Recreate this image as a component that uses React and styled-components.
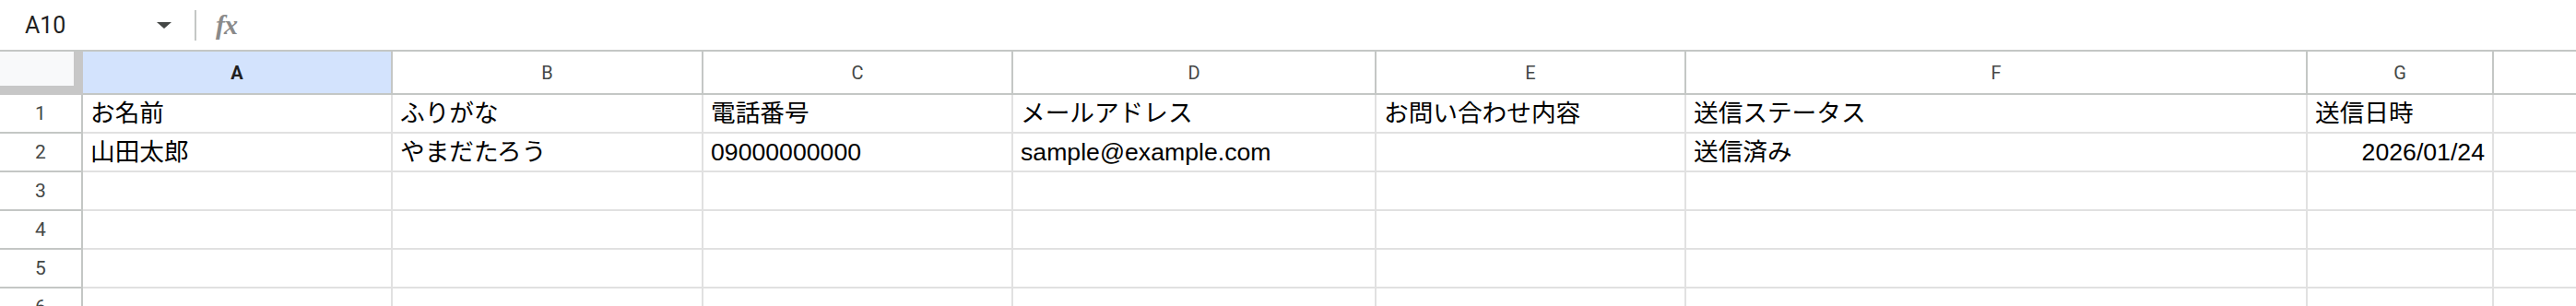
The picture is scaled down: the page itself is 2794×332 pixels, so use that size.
import React from "react";
import styled, { createGlobalStyle } from "styled-components";

const GlobalStyle = createGlobalStyle`
  html, body {
    margin: 0;
    padding: 0;
    background: #ffffff;
  }
  body {
    font-family: "Liberation Sans", Arial, "Noto Sans CJK JP", sans-serif;
  }
`;

// column H runs past the right edge of the window, so its letter is off-screen
const COLS = [
  { key: "A", width: 336 },
  { key: "B", width: 337 },
  { key: "C", width: 336 },
  { key: "D", width: 394 },
  { key: "E", width: 336 },
  { key: "F", width: 674 },
  { key: "G", width: 202 },
  { key: "H", width: 336 },
];

const ROWS = [
  ["お名前", "ふりがな", "電話番号", "メールアドレス", "お問い合わせ内容", "送信ステータス", "送信日時", ""],
  ["山田太郎", "やまだたろう", "09000000000", "sample@example.com", "", "送信済み", "2026/01/24", ""],
  [],
  [],
  [],
  [],
];

const Page = styled.div`
  width: 2794px;
  height: 332px;
  overflow: hidden;
  display: flex;
  flex-direction: column;
`;

const FormulaBar = styled.div`
  height: 54px;
  flex-shrink: 0;
  display: flex;
  align-items: center;
  border-bottom: 2px solid #c4c7c5;
`;

const NameBox = styled.div`
  width: 211px;
  height: 100%;
  display: flex;
  align-items: center;
  padding-left: 27px;
  padding-right: 25px;
  box-sizing: border-box;
  font-family: Roboto, "Liberation Sans", sans-serif;
  font-size: 25px;
  color: #1f1f1f;
`;

const NameText = styled.span`
  flex: 1;
`;

const Caret = styled.span`
  width: 0;
  height: 0;
  border-left: 8px solid transparent;
  border-right: 8px solid transparent;
  border-top: 7px solid #444746;
`;

const Divider = styled.div`
  width: 2px;
  height: 33px;
  background: #c4c7c5;
`;

const Fx = styled.span`
  margin-left: 21px;
  font-family: "Liberation Serif", serif;
  font-style: italic;
  font-weight: 700;
  font-size: 30px;
  color: #8a8a8a;
  letter-spacing: -1px;
`;

const Row = styled.div`
  display: flex;
  flex-shrink: 0;
`;

const Corner = styled.div`
  width: 90px;
  height: 47px;
  flex-shrink: 0;
  background: #c7c7c7;
`;

const CornerInner = styled.div`
  width: 80px;
  height: 37px;
  background: #f8f9fa;
`;

const ColHeader = styled.div`
  width: ${(p) => p.$w}px;
  flex-shrink: 0;
  height: 47px;
  box-sizing: border-box;
  border-right: 2px solid #c4c7c5;
  border-bottom: 2px solid #c4c7c5;
  background: ${(p) => (p.$active ? "#d3e3fd" : "#ffffff")};
  display: flex;
  align-items: center;
  justify-content: center;
  font-family: Roboto, "Liberation Sans", sans-serif;
  font-size: 20px;
  font-weight: ${(p) => (p.$active ? 700 : 400)};
  color: ${(p) => (p.$active ? "#1f1f1f" : "#444746")};
`;

const RowHeader = styled.div`
  width: 90px;
  height: 42px;
  flex-shrink: 0;
  box-sizing: border-box;
  border-right: 2px solid #c4c7c5;
  border-bottom: 2px solid #c4c7c5;
  display: flex;
  align-items: center;
  justify-content: center;
  font-family: Roboto, "Liberation Sans", sans-serif;
  font-size: 21px;
  color: #444746;
`;

const Cell = styled.div`
  width: ${(p) => p.$w}px;
  flex-shrink: 0;
  height: 42px;
  box-sizing: border-box;
  border-right: 2px solid #e1e1e1;
  border-bottom: 2px solid #e1e1e1;
  padding: 0 8px;
  font-size: 26.67px;
  line-height: 40px;
  color: #000000;
  white-space: nowrap;
  overflow: hidden;
  text-align: ${(p) => (p.$right ? "right" : "left")};
`;

const isDate = (v) => /^\d{4}\/\d{2}\/\d{2}$/.test(v);

export default function App() {
  return (
    <>
      <GlobalStyle />
      <Page>
        <FormulaBar>
          <NameBox>
            <NameText>A10</NameText>
            <Caret />
          </NameBox>
          <Divider />
          <Fx>fx</Fx>
        </FormulaBar>

        <Row>
          <Corner>
            <CornerInner />
          </Corner>
          {COLS.map((c) => (
            <ColHeader key={c.key} $w={c.width} $active={c.key === "A"}>
              {c.key}
            </ColHeader>
          ))}
        </Row>

        {ROWS.map((r, i) => (
          <Row key={i}>
            <RowHeader>{i + 1}</RowHeader>
            {COLS.map((c, j) => {
              const v = r[j] || "";
              return (
                <Cell key={c.key} $w={c.width} $right={isDate(v)}>
                  {v}
                </Cell>
              );
            })}
          </Row>
        ))}
      </Page>
    </>
  );
}
